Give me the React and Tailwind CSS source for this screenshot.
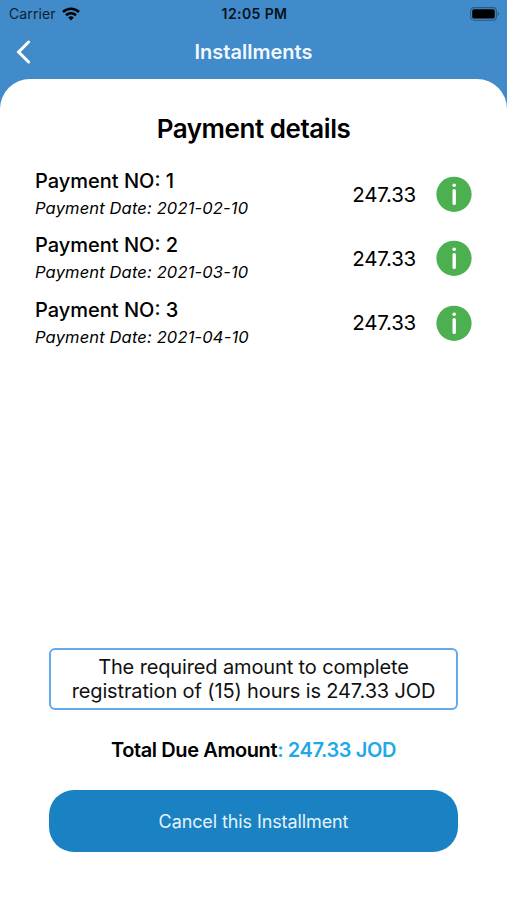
import React from 'react'

const payments = [
  { no: 1, date: '2021-02-10', amount: '247.33' },
  { no: 2, date: '2021-03-10', amount: '247.33' },
  { no: 3, date: '2021-04-10', amount: '247.33' },
]

function WifiIcon() {
  return (
    <svg width="18" height="14" viewBox="0 0 18 14" fill="none" stroke="#000" strokeWidth="2.6">
      <path d="M1 5a11.6 11.6 0 0 1 16 0" />
      <path d="M4 8.3a7.2 7.2 0 0 1 10 0" />
      <path d="M9 13.4 6.2 10.6a4 4 0 0 1 5.6 0z" fill="#000" stroke="none" />
    </svg>
  )
}

function BatteryIcon() {
  return (
    <svg width="30" height="14" viewBox="0 0 30 14" fill="none">
      <rect x="0.6" y="0.6" width="25.8" height="12.6" rx="3.4" stroke="#2b5a82" strokeWidth="1.1" />
      <rect x="2.2" y="2.2" width="22.6" height="9.4" rx="1.9" fill="#000" />
      <path d="M27.7 4.8c1.7.6 1.7 3.6 0 4.2z" fill="#2b5a82" />
    </svg>
  )
}

function StatusBar() {
  return (
    <div className="grid grid-cols-3 items-center h-[27px] pl-[9px] pr-[7px] text-black">
      <div className="flex items-center gap-1.5 text-[14px] tracking-[0.1px] text-[#0d1e2c]">
        <span>Carrier</span>
        <WifiIcon />
      </div>
      <span className="text-center text-[14px] tracking-[0.4px] font-semibold text-[#06121c]">12:05 PM</span>
      <div className="flex justify-end">
        <BatteryIcon />
      </div>
    </div>
  )
}

function Header() {
  return (
    <div className="grid grid-cols-3 items-center h-[52px] pb-0.5 px-4">
      <button className="w-fit">
        <svg width="16" height="24" viewBox="0 0 16 24" fill="none" stroke="#fff" strokeWidth="3">
          <path d="M12.6 2 2.6 12 12.6 22" strokeLinecap="round" />
        </svg>
      </button>
      <h1 className="text-center text-[20px] font-semibold text-[#f1f8ff]">Installments</h1>
    </div>
  )
}

function InfoIcon() {
  return (
    <svg width="36" height="36" viewBox="0 0 36 36">
      <circle cx="18" cy="18.3" r="17.6" fill="#4caf50" />
      <circle cx="18.2" cy="9.3" r="1.8" fill="#fff" />
      <path d="M18.2 14.6v12.8" stroke="#fff" strokeWidth="3.4" strokeLinecap="round" />
    </svg>
  )
}

function PaymentRow({ payment }) {
  return (
    <div className="flex items-center h-[64.3px]">
      <div className="flex-1 text-black">
        <p className="text-[20px] leading-7 font-medium">Payment NO: {payment.no}</p>
        <p className="text-[16.5px] leading-[26px] tracking-[0.15px] italic">Payment Date: {payment.date}</p>
      </div>
      <span className="mr-5 pt-0.5 text-[20.5px] tracking-[-0.25px] text-black">{payment.amount}</span>
      <InfoIcon />
    </div>
  )
}

export default function App() {
  return (
    <div className="flex flex-col w-full h-[900px] overflow-hidden bg-[#428bca] whitespace-nowrap font-['Inter',sans-serif]">
      <StatusBar />
      <Header />
      <main className="flex flex-col flex-1 rounded-t-[30px] bg-white">
        <h2 className="mt-8 text-center text-[26px] leading-9 tracking-[-0.45px] font-semibold text-black">Payment details</h2>

        <div className="mt-[15px] px-[35px]">
          {payments.map((p) => (
            <PaymentRow key={p.no} payment={p} />
          ))}
        </div>

        {/* Summary and action */}
        <div className="mt-auto mb-12 mx-[49px] text-center">
          <div className="flex flex-col justify-center h-[62px] rounded-md border-2 border-[#64a8ef] text-[20px] leading-6 tracking-[-0.13px] text-[#111]">
            <p>The required amount to complete</p>
            <p>registration of (15) hours is 247.33 JOD</p>
          </div>
          <p className="mt-[26px] text-[20px] leading-7 tracking-[-0.4px] font-semibold text-[#1fa9e8]">
            <span className="text-black">Total Due Amount</span>: 247.33 JOD
          </p>
          <button className="mt-[26px] w-full h-[62px] rounded-[25px] bg-[#1a82c2] text-[18px] tracking-[-0.1px] text-[#e3f3fc]">
            Cancel this Installment
          </button>
        </div>
      </main>
    </div>
  )
}
